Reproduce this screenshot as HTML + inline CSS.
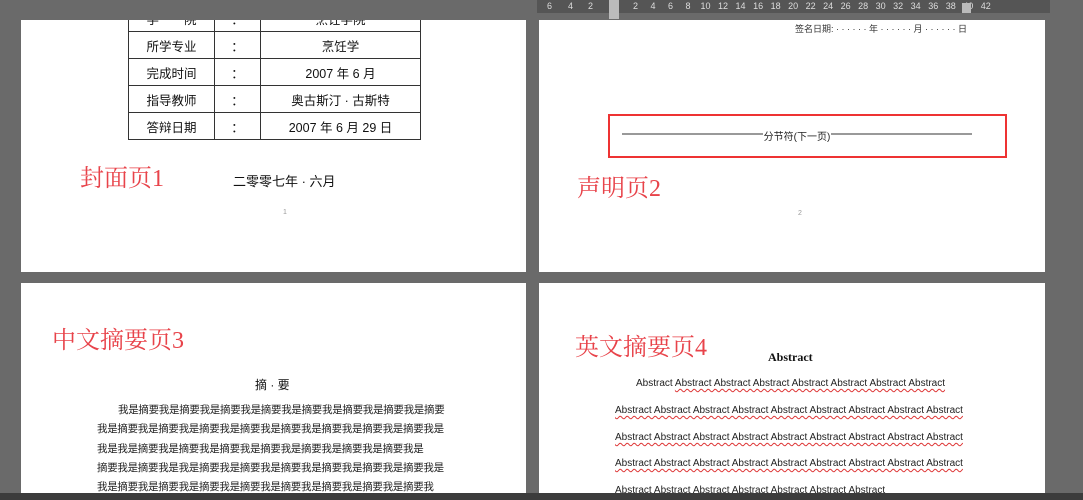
<!DOCTYPE html>
<html><head><meta charset="utf-8"><style>
*{margin:0;padding:0;box-sizing:border-box}
body{width:1083px;height:500px;background:#6a6a6a;position:relative;overflow:hidden;font-family:"Liberation Sans","Noto Sans CJK SC",sans-serif;color:#111}
.pg{position:absolute;background:#fff;overflow:hidden}
.a{position:absolute;white-space:nowrap}
.red{color:#e8434a;font-family:"Liberation Serif","Noto Serif CJK SC",serif;font-size:24px}
table{position:absolute;border-collapse:collapse;left:107px;top:-16px}
td{border:1.5px solid #333;height:27px;font-size:12.5px;text-align:center;padding:0}
.ab{font-size:10px;color:#222}
.ab span{text-decoration:underline wavy #d33;text-underline-offset:2px}
.cn{font-size:10.5px;color:#222;letter-spacing:-0.3px}
</style></head><body>
<div class="a" style="left:537px;top:0;width:513px;height:13px;background:#555;color:#ddd;font-size:9px;line-height:12px">
<span style="position:absolute;left:10px">6</span><span style="position:absolute;left:31px">4</span><span style="position:absolute;left:51px">2</span>
<span style="position:absolute;left:72px;top:0;width:10px;height:19px;background:#bbb"></span>
<span style="position:absolute;left:96px">2 &nbsp;&nbsp;&nbsp; 4 &nbsp;&nbsp;&nbsp; 6 &nbsp;&nbsp;&nbsp; 8 &nbsp;&nbsp; 10 &nbsp; 12 &nbsp; 14 &nbsp; 16 &nbsp; 18 &nbsp; 20 &nbsp; 22 &nbsp; 24 &nbsp; 26 &nbsp; 28 &nbsp; 30 &nbsp; 32 &nbsp; 34 &nbsp; 36 &nbsp; 38 &nbsp; 40 &nbsp; 42</span>
<span style="position:absolute;left:425px;top:3px;width:9px;height:10px;background:#bbb"></span>
</div>
<div class="pg" style="left:21px;top:20px;width:505px;height:252px">
<table><tr><td style="width:86px">学　　院</td><td style="width:46px">：</td><td style="width:160px">烹饪学院</td></tr>
<tr><td>所学专业</td><td>：</td><td>烹饪学</td></tr>
<tr><td>完成时间</td><td>：</td><td>2007 年 6 月</td></tr>
<tr><td>指导教师</td><td>：</td><td>奥古斯汀 · 古斯特</td></tr>
<tr><td>答辩日期</td><td>：</td><td>2007 年 6 月 29 日</td></tr></table>
<div class="a red" style="left:59px;top:138px">封面页1</div>
<div class="a" style="left:212px;top:151px;font-size:13px">二零零七年 · 六月</div>
<div class="a" style="left:262px;top:189px;font-size:7px;color:#999">1</div>
</div>
<div class="pg" style="left:539px;top:20px;width:506px;height:252px">
<div class="a" style="left:256px;top:2px;font-size:9px;color:#333">签名日期: · · · · · · 年 · · · · · · 月 · · · · · · 日</div>
<div class="a" style="left:69px;top:94px;width:399px;height:44px;border:2px solid #e33"></div>
<div class="a" style="left:83px;top:108px;width:350px;font-size:10px;text-align:center;color:#222;background:linear-gradient(#fff 5px,#999 5px,#999 7px,#fff 7px)"><span style="background:#fff;padding:0 1px">分节符(下一页)</span></div>
<div class="a red" style="left:38px;top:148px">声明页2</div>
<div class="a" style="left:259px;top:190px;font-size:7px;color:#999">2</div>
</div>
<div class="pg" style="left:21px;top:283px;width:505px;height:210px">
<div class="a red" style="left:31px;top:37px">中文摘要页3</div>
<div class="a" style="left:234px;top:93px;font-size:12px">摘 · 要</div>
<div class="a cn" style="left:97px;top:119px">我是摘要我是摘要我是摘要我是摘要我是摘要我是摘要我是摘要我是摘要</div>
<div class="a cn" style="left:76px;top:138px">我是摘要我是摘要我是摘要我是摘要我是摘要我是摘要我是摘要我是摘要我是</div>
<div class="a cn" style="left:76px;top:158px">我是我是摘要我是摘要我是摘要我是摘要我是摘要我是摘要我是摘要我是</div>
<div class="a cn" style="left:76px;top:177px">摘要我是摘要我是我是摘要我是摘要我是摘要我是摘要我是摘要我是摘要我是</div>
<div class="a cn" style="left:76px;top:196px">我是摘要我是摘要我是摘要我是摘要我是摘要我是摘要我是摘要我是摘要我</div>
</div>
<div class="pg" style="left:539px;top:283px;width:506px;height:210px">
<div class="a red" style="left:36px;top:44px">英文摘要页4</div>
<div class="a" style="left:229px;top:67px;font-size:12px;font-weight:bold;font-family:'Liberation Serif',serif">Abstract</div>
<div class="a ab" style="left:97px;top:95px">Abstract <span>Abstract Abstract Abstract Abstract Abstract Abstract Abstract</span></div>
<div class="a ab" style="left:76px;top:122px"><span>Abstract Abstract Abstract Abstract Abstract Abstract Abstract Abstract Abstract</span></div>
<div class="a ab" style="left:76px;top:149px"><span>Abstract Abstract Abstract Abstract Abstract Abstract Abstract Abstract Abstract</span></div>
<div class="a ab" style="left:76px;top:175px"><span>Abstract Abstract Abstract Abstract Abstract Abstract Abstract Abstract Abstract</span></div>
<div class="a ab" style="left:76px;top:202px">Abstract Abstract Abstract Abstract Abstract Abstract Abstract</div>
</div>
<div class="a" style="left:0;top:493px;width:1083px;height:7px;background:#3c3c3c"></div>
</body></html>
